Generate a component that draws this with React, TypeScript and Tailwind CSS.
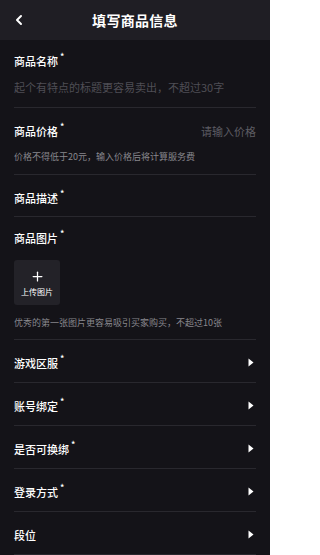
import { ChevronLeft, Plus } from "lucide-react";

const font = { fontFamily: '"Noto Sans CJK SC", "Noto Sans", sans-serif' };

function Label({ text, required = true }: { text: string; required?: boolean }) {
  return (
    <span className="flex items-start text-[11px] leading-4 h-4 text-white font-medium">
      {text}
      {required && <span className="ml-[2px] text-[9px] leading-[9px] -mt-[1px]">*</span>}
    </span>
  );
}

function Divider() {
  return <div className="mx-[14px] h-px bg-[#29282e]" />;
}

function SelectRow({ text, required = true }: { text: string; required?: boolean }) {
  return (
    <>
      <div className="flex items-center justify-between px-[14px] h-[42px] pt-[3px]">
        <Label text={text} required={required} />
        <svg width="6" height="9" viewBox="0 0 6 9" className="mr-[2px]">
          <path d="M0.5 0.5 L5.5 4.5 L0.5 8.5 Z" fill="#ffffff" />
        </svg>
      </div>
      <Divider />
    </>
  );
}

export default function App() {
  return (
    <div className="w-[270px] h-[555px] bg-[#141318] overflow-hidden" style={font}>
      <header className="relative h-10 bg-[#1f1e24] flex items-center justify-center">
        <ChevronLeft className="absolute left-[11px] top-[12px] w-[16px] h-[16px] text-white" strokeWidth={3} />
        <h1 className="text-[14px] font-bold text-white tracking-[0.3px]">填写商品信息</h1>
      </header>

      <section className="px-[14px] pt-[13px] pb-[12px]">
        <Label text="商品名称" />
        <div className="mt-[10px] text-[11px] leading-4 text-[#4f4e55]">
          起个有特点的标题更容易卖出，不超过30字
        </div>
      </section>
      <Divider />

      <section className="px-[14px] pt-[15px] pb-[10px]">
        <div className="flex items-center justify-between">
          <Label text="商品价格" />
          <span className="text-[11px] leading-4 text-[#5d5c63]">请输入价格</span>
        </div>
        <div className="mt-[11px] text-[9px] leading-[14px] text-[#88878d]">
          价格不得低于20元，输入价格后将计算服务费
        </div>
      </section>
      <Divider />

      <section className="px-[14px] pt-[15px] pb-[10px]">
        <Label text="商品描述" />
      </section>
      <Divider />

      <section className="px-[14px] pt-[13px] pb-[9px]">
        <Label text="商品图片" />
        <div className="mt-[14px] w-[46px] h-[45px] rounded-[3px] bg-[#232228] flex flex-col items-center justify-center gap-[3px]">
          <Plus className="w-[15px] h-[15px] text-white" strokeWidth={2} />
          <span className="text-[8px] leading-[10px] text-white">上传图片</span>
        </div>
        <div className="mt-[11px] text-[9px] leading-[14px] text-[#88878d]">
          优秀的第一张图片更容易吸引买家购买，不超过10张
        </div>
      </section>
      <Divider />

      <SelectRow text="游戏区服" />
      <SelectRow text="账号绑定" />
      <SelectRow text="是否可换绑" />
      <SelectRow text="登录方式" />
      <SelectRow text="段位" required={false} />
    </div>
  );
}
